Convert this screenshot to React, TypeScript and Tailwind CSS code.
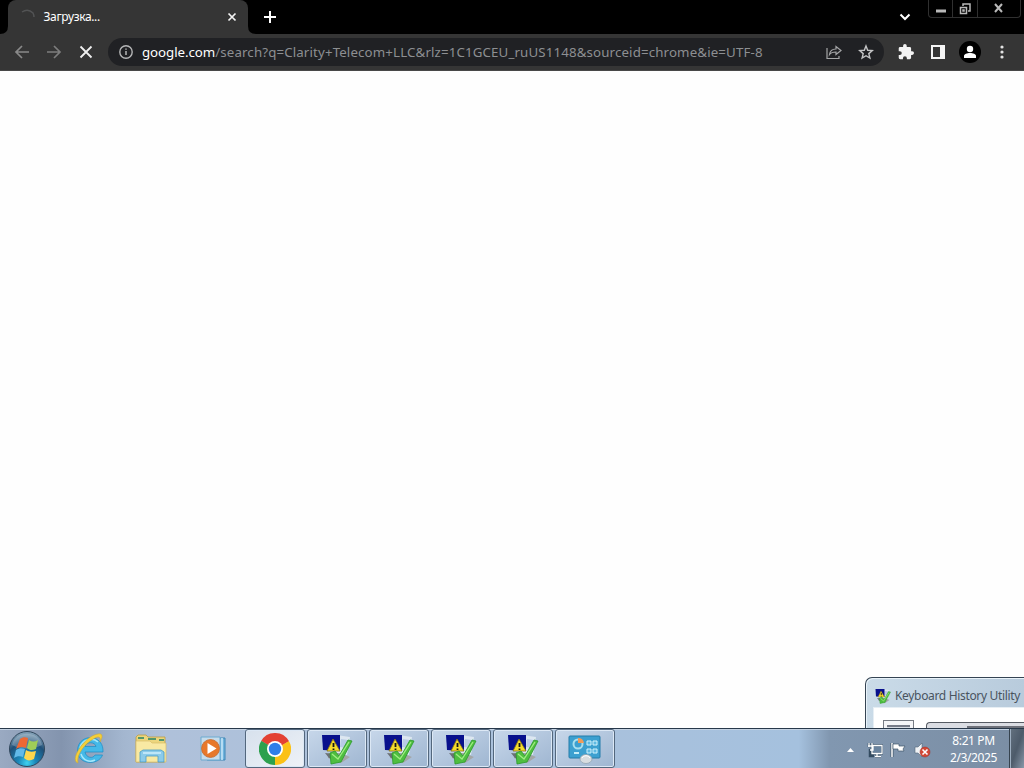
import type { ReactNode } from "react";

const ToolButton = ({ children }: { children: ReactNode }) => (
  <button className="w-8 h-8 flex items-center justify-center">{children}</button>
);

const UtilityIcon = ({ size }: { size: number }) => (
  <svg width={size} height={size} viewBox="0 0 32 32">
    <path d="M15 2l14 2-3 18-13-2z" fill="#dde7f1" />
    <path d="M20 6l7 1-2 8-6-1z" fill="#b9cbe6" />
    <path d="M7 20l12 0 10 4-9 6-13-5z" fill="#a4a6a6" />
    <path d="M4 20l9 1 3 6-8-2z" fill="#6b7074" />
    <path d="M1 2h18v16l-17-1z" fill="#08108c" />
    <path d="M12 6l7 12H6z" fill="#f5dc2c" stroke="#8c7512" strokeWidth="0.8" />
    <path d="M12.500 10v4M12.500 15.500v1.500" stroke="#161616" strokeWidth="1.800" />
    <path d="M9 20l5-2 4 5L27 7l4 1-11 21-10 2z" fill="#4fbe40" stroke="#2a9a2a" strokeWidth="0.8" />
    <path d="M11 21l6 5L28 9" stroke="#a0ee83" strokeWidth="1.300" fill="none" />
  </svg>
);

const StartOrb = () => (
  <svg width="38" height="38" viewBox="0 0 38 38">
    <defs>
      <radialGradient id="orb" cx="50%" cy="90%" r="85%">
        <stop offset="0" stopColor="#3fd2f0" />
        <stop offset="0.3" stopColor="#1b86b8" />
        <stop offset="0.7" stopColor="#1f5078" />
        <stop offset="1" stopColor="#7e9db4" />
      </radialGradient>
    </defs>
    <circle cx="19" cy="19" r="17.500" fill="url(#orb)" stroke="#31475c" />
    <path d="M4 15C7 0 31 0 34 15c-8 4-21 5-30 0z" fill="#ffffff" opacity="0.24" />
    <path d="M12 9c3-2 5-2 8-1l-2 10c-4-2-7-1-10 1z" fill="#ee6834" />
    <path d="M21 10c3 2 6 2 9 0l-2 9c-4 2-7 1-9-1z" fill="#9fce58" />
    <path d="M8 20c3-2 6-2 9-1l-2 8c-3-1-6-1-9 1z" fill="#62b9e8" />
    <path d="M18 20c3 2 6 2 10 1l-2 8c-4 2-7 2-10-1z" fill="#ffd64c" />
  </svg>
);

const ExplorerE = () => (
  <svg width="34" height="34" viewBox="0 0 34 34">
    <path
      d="M31 20H13c1 6 8 7 10 3h7.500c-4 11-25 10-25-4C5.500 1 32 1 31 20zM13 14.500h11c-1-5-10-5-11 0z"
      fill="#45b9e8"
      stroke="#1b8cc4"
      strokeWidth="0.7"
    />
    <path d="M8 16C10 7 21 5 26 10M9 22c2 6 8 9 14 6" stroke="#a6e7fa" strokeWidth="1.500" fill="none" />
    <path d="M6 31C-3 29 12 4 26 2c5-1 5 3 2 8 1-5-1-6-5-4C13 11 4 23 6 31z" fill="#f5cf39" stroke="#cba42c" strokeWidth="0.5" />
  </svg>
);

const FolderIcon = () => (
  <svg width="34" height="30" viewBox="0 0 34 30">
    <path d="M2 3l2-2h8l2 2h17v25H2z" fill="#ecd67d" stroke="#bb9c45" strokeWidth="0.8" />
    <path d="M4 4h6M14 5h8M25 6h5" stroke="#54976b" strokeWidth="2" />
    <path d="M2 7h14l2 2h14v19H2z" fill="#f8e9a3" stroke="#d9bd68" strokeWidth="0.7" />
    <path d="M6 28V18l3-2h18l3 2v10h-6v-6H12v6z" fill="#8bcbe9" stroke="#469bc5" strokeWidth="0.8" />
    <path d="M9 19h18" stroke="#d4f3ff" strokeWidth="1.4" />
  </svg>
);

const MediaIcon = () => (
  <svg width="28" height="26" viewBox="0 0 28 26">
    <path d="M7 2h18v22H7z" fill="#72b4dd" stroke="#3c87b7" />
    <path d="M22 2v22" stroke="#cceafa" strokeWidth="1.5" />
    <path d="M1 1h19v23H1z" fill="#c6dceb" stroke="#6daad0" />
    <circle cx="10.500" cy="12.500" r="9" fill="#e7782b" stroke="#c16428" strokeWidth="0.7" />
    <path d="M7.500 7v11l9-5.500z" fill="#fff" />
  </svg>
);

const ChromeIcon = () => (
  <svg width="32" height="32" viewBox="0 0 32 32">
    <path d="M16 16L2.140 8A16 16 0 0 1 29.860 8z" fill="#e34133" />
    <path d="M16 16L29.860 8A16 16 0 0 1 16 32z" fill="#fbc116" />
    <path d="M16 16V32A16 16 0 0 1 2.140 8z" fill="#2da04e" />
    <path d="M16 8h13.860L16 16z" fill="#e34133" />
    <path d="M22.930 20L16 32V16z" fill="#fbc116" />
    <path d="M9.070 20L2.140 8 16 16z" fill="#2da04e" />
    <circle cx="16" cy="16" r="8" fill="#fff" />
    <circle cx="16" cy="16" r="6.200" fill="#307ee8" />
  </svg>
);

const ControlPanelIcon = () => (
  <svg width="34" height="30" viewBox="0 0 34 30">
    <rect x="1" y="2" width="31" height="22" rx="1" fill="#3ca0d0" stroke="#257da9" />
    <circle cx="10" cy="10" r="4.500" fill="none" stroke="#a8dfef" strokeWidth="2" />
    <path d="M10 9V4a6 6 0 0 1 6 5z" fill="#f19b59" />
    <path d="M19 7h4v4h-4zM25 7h4v4h-4zM19 15h4v4h-4zM25 15h4v4h-4z" fill="#5db9e2" stroke="#d0f1fc" />
    <path d="M6 19h5" stroke="#c5eef8" strokeWidth="2" />
    <ellipse cx="18" cy="25" rx="6" ry="4.500" fill="#d8dde0" stroke="#8c9fac" strokeWidth="0.7" />
    <path d="M14 24c2-3 6-3 8 0" stroke="#fff" fill="none" />
  </svg>
);

const TaskButton = ({ children, active }: { children: ReactNode; active?: boolean }) => (
  <button
    className={`w-[60px] h-[39px] shrink-0 flex items-center justify-center rounded-[3px] border border-[#53677d] shadow-[inset_0_0_0_1px_#dce8f5] ${
      active
        ? "bg-linear-to-br from-[#d7e1ed] to-[#eef2f7]"
        : "bg-linear-to-br from-[#c7d7ea] to-[#9fb6d1]"
    }`}
  >
    {children}
  </button>
);

const TabStrip = () => (
  <div className="h-[34px] bg-black flex text-white">
    <div className="relative ml-2 w-60 h-full bg-[#353535] rounded-t-lg flex items-center pl-3 pr-[10px]">
      <svg className="absolute -left-2 bottom-0" width="8" height="8"><path d="M8 0v8H0q8 0 8-8" fill="#353535" /></svg>
      <svg className="absolute -right-2 bottom-0" width="8" height="8"><path d="M0 0v8h8q-8 0-8-8" fill="#353535" /></svg>
      <svg width="16" height="16" viewBox="0 0 16 16" fill="none">
        <path d="M2 3q6-4 11 1 1 2 1 4" stroke="#525354" strokeWidth="1.500" />
      </svg>
      <span className="ml-[7.500px] text-xs tracking-[-0.35px]">Загрузка...</span>
      <svg className="ml-auto" width="12" height="12" viewBox="0 0 12 12">
        <path d="M2.500 2.500l7 7m0-7l-7 7" stroke="#f3f3f3" strokeWidth="1.700" />
      </svg>
    </div>
    <button className="ml-[14px] w-4 flex items-center justify-center">
      <svg width="14" height="14"><path d="M7 1v12M1 7h12" stroke="#fff" strokeWidth="2" /></svg>
    </button>
    <button className="ml-auto mr-[15px] w-4 flex items-center justify-center">
      <svg width="12" height="12" fill="none"><path d="M1.500 3.500L6 8l4.500-4.500" stroke="#fff" strokeWidth="2" /></svg>
    </button>
    <div className="mr-[3px] w-[93px] h-[18px] border border-t-0 border-[#303030] rounded-b-sm flex text-[#c2c2c2]">
      <button className="w-6 border-r border-[#303030] flex items-center justify-center">
        <svg width="12" height="12"><path d="M1 8h10" stroke="#b9b9b9" strokeWidth="3" /></svg>
      </button>
      <button className="w-[25px] border-r border-[#303030] flex items-center justify-center">
        <svg width="12" height="12" fill="none"><path d="M4 3V1h7v7H9M1.500 4.500h6v6h-6z M4 7h1v1H4z" stroke="#b9b9b9" strokeWidth="1.500" /></svg>
      </button>
      <button className="flex-1 flex items-center justify-center pb-0.5">
        <svg width="12" height="10"><path d="M2 1l7 8M9 1L2 9" stroke="#b9b9b9" strokeWidth="2" /></svg>
      </button>
    </div>
  </div>
);

const Toolbar = () => (
  <div className="h-[37px] bg-[#353535] border-b border-[#484848] flex items-center pl-[6px] pr-[6px]">
    <ToolButton>
      <svg width="16" height="16" fill="none"><path d="M15 8H2M8 2L2 8l6 6" stroke="#898989" strokeWidth="1.700" /></svg>
    </ToolButton>
    <ToolButton>
      <svg width="16" height="16" fill="none"><path d="M1 8h13M8 2l6 6-6 6" stroke="#7d7d7d" strokeWidth="1.700" /></svg>
    </ToolButton>
    <ToolButton>
      <svg width="16" height="16"><path d="M2.500 2.500l11 11m0-11l-11 11" stroke="#f0f0f0" strokeWidth="1.800" /></svg>
    </ToolButton>
    <div className="ml-[6px] w-[776px] h-7 bg-[#202124] rounded-full flex items-center pl-[10px] pr-0.5">
      <svg width="16" height="16" fill="none">
        <circle cx="8" cy="8" r="6.200" stroke="#b5b6b7" strokeWidth="1.400" />
        <path d="M8 7v4M8 4.500v1.300" stroke="#b5b6b7" strokeWidth="1.500" />
      </svg>
      <div className="ml-2 text-[13.300px] leading-5 whitespace-nowrap text-[#8d8f92]">
        <span className="text-white tracking-[-0.060px]">google.com</span>
        <span className="tracking-[0.132px]">/search?q=Clarity+Telecom+LLC&amp;rlz=1C1GCEU_ruUS1148&amp;sourceid=chrome&amp;ie=UTF-8</span>
      </div>
      <div className="ml-auto flex">
        <ToolButton>
          <svg width="16" height="16" fill="none" stroke="#a5a6a7" strokeWidth="1.200">
            <path d="M1 4v10.500h12V12M3.500 10.500c.5-4 3-5.500 6.500-5.500V2.500l5 4-5 4V8c-3 0-5 .5-6.500 2.500z" />
          </svg>
        </ToolButton>
        <ToolButton>
          <svg width="16" height="16" fill="none" stroke="#c4c5c6" strokeWidth="1.400">
            <path d="M8 2l1.700 4.300 4.600.3-3.500 3 1.100 4.500L8 11.700l-3.900 2.400 1.100-4.500-3.500-3 4.600-.3z" />
          </svg>
        </ToolButton>
      </div>
    </div>
    <div className="ml-[6px] flex">
      <ToolButton>
        <svg width="16" height="16" viewBox="1 1 22 22" fill="#f3f3f3">
          <path d="M20.500 11H19V7a2 2 0 0 0-2-2h-4V3.500a2.500 2.500 0 0 0-5 0V5H4a2 2 0 0 0-2 2v3.800h1.500a2.700 2.700 0 0 1 0 5.400H2V20a2 2 0 0 0 2 2h3.800v-1.500a2.700 2.700 0 0 1 5.400 0V22H17a2 2 0 0 0 2-2v-4h1.500a2.500 2.500 0 0 0 0-5z" />
        </svg>
      </ToolButton>
      <ToolButton>
        <svg width="14" height="14"><path d="M0 0h14v14H0z" fill="#f5f5f5" /><path d="M2 2h7v10H2z" fill="#353535" /></svg>
      </ToolButton>
      <ToolButton>
        <svg width="22" height="22" fill="#fff"><circle cx="11" cy="11" r="11" fill="#000" /><circle cx="11" cy="8" r="3.200" /><path d="M5 17v-2c0-4 12-4 12 0v2z" /></svg>
      </ToolButton>
      <ToolButton>
        <svg width="4" height="16" fill="#e3e3e3"><circle cx="2" cy="3" r="1.600" /><circle cx="2" cy="8" r="1.600" /><circle cx="2" cy="13" r="1.600" /></svg>
      </ToolButton>
    </div>
  </div>
);

// sits at the corner, partly behind the taskbar
const UtilityWindow = () => (
  <div className="absolute left-[865px] bottom-0 w-[159px] h-[51px] overflow-hidden rounded-tl-[7px] border-l border-t border-[#354453] bg-linear-to-r from-[#cadbe8] to-[#b8cbdc] shadow-[inset_1px_1px_0_#e8f2f9]">
    <div className="h-[29px] pt-1.5 pl-[9px] flex items-center text-[#49545f]">
      <UtilityIcon size={16} />
      <span className="ml-[4px] text-[12px] tracking-[-0.330px] whitespace-nowrap">Keyboard History Utility</span>
    </div>
    <div className="ml-[7px] h-[21px] bg-white border-l border-t border-[#e6eef4] pt-[12px] pl-[9px] flex">
      <div className="w-[31px] h-5 border border-[#777c84] bg-[#f5f6f8] px-[3px] pt-1">
        <div className="h-3 border-t-2 border-[#777c88] bg-[#d7dce3]" />
      </div>
      <div className="ml-3 mt-0.5 flex-1 h-5 border-l border-t border-[#565b63] rounded-tl bg-[#dbdde3] pl-10 pt-[3px]">
        <div className="h-3 bg-[#6d7079]" />
      </div>
    </div>
  </div>
);

const Tray = () => (
  <div className="ml-auto flex items-center h-full text-white">
    <svg className="mt-0.5" width="7" height="4"><path d="M0 4l3.500-4L7 4z" fill="#fff" /></svg>
    <svg className="ml-[13px] mt-0.5" width="16" height="16" fill="none">
      <path d="M5 3.500h10v8H5zM8 14.500h6M10 12v2M2 1v4m3-4v3M1 4h5v4H3v6h4" stroke="#334b60" strokeWidth="2.500" />
      <path d="M6 4.500h8v6H6z" fill="#69839e" />
      <path d="M5 3.500h10v8H5zM8 14.500h6M10 12v2M2 1v4m3-4v3M1 4h5v4H3" stroke="#fff" strokeWidth="1.300" />
    </svg>
    <svg className="ml-[7px] mt-0.5" width="16" height="16">
      <path d="M2 1v14" stroke="#41566a" strokeWidth="3" />
      <path d="M2 1v14" stroke="#fff" strokeWidth="1.500" />
      <path d="M3 2h6v2h6l-2 3 1 2H8V7H3z" fill="#fff" stroke="#41566a" strokeWidth="0.700" />
    </svg>
    <svg className="ml-[8px] mt-0.5" width="17" height="16">
      <path d="M1 5h3l4-4v14l-4-4H1z" fill="#eff2f5" stroke="#536779" strokeWidth="0.600" />
      <circle cx="11" cy="10" r="5" fill="#d34836" stroke="#a13028" strokeWidth="0.500" />
      <path d="M8.500 7.500l5 5m0-5l-5 5" stroke="#fff" strokeWidth="1.600" />
    </svg>
    <div className="w-[78px] pl-2 pr-px text-center text-[12px] leading-[17px] tracking-[-0.400px] whitespace-nowrap">
      <div>8:21 PM</div>
      <div>2/3/2025</div>
    </div>
    <div className="w-[15px] h-full border-l border-[#36434f] shadow-[inset_1px_0_0_#9daebf] bg-linear-to-br from-[#63717f] via-[#4d5b6a] to-[#8998a9]" />
  </div>
);

const Taskbar = () => (
  <div className="h-10 border-t border-[#27384a] bg-[linear-gradient(90deg,#9aaac2_0,#8394ae_6%,#a3b6cf_12%,#afc1da_16%,#a9c1dc_55%,#a5c1de_78%,#8197b0_81%,#7b8ea4_100%)] shadow-[inset_0_1px_0_#c4d2e2] flex items-center">
    <div className="w-[58px] pl-2 flex"><StartOrb /></div>
    <div className="w-[62px] flex justify-center"><ExplorerE /></div>
    <div className="w-[62px] flex justify-center"><FolderIcon /></div>
    <div className="w-[63px] flex justify-center"><MediaIcon /></div>
    <div className="flex gap-0.5">
      <TaskButton active><ChromeIcon /></TaskButton>
      {[1, 2, 3, 4].map((i) => (
        <TaskButton key={i}><UtilityIcon size={32} /></TaskButton>
      ))}
      <TaskButton><ControlPanelIcon /></TaskButton>
    </div>
    <Tray />
  </div>
);

const App = () => {
  return (
    <div className="w-[1024px] h-[768px] overflow-hidden flex flex-col bg-white font-['Noto_Sans','Open_Sans',sans-serif]">
      <TabStrip />
      <Toolbar />
      <main className="relative flex-1 bg-[#fefefe]">
        <UtilityWindow />
      </main>
      <Taskbar />
    </div>
  );
};

export default App;
